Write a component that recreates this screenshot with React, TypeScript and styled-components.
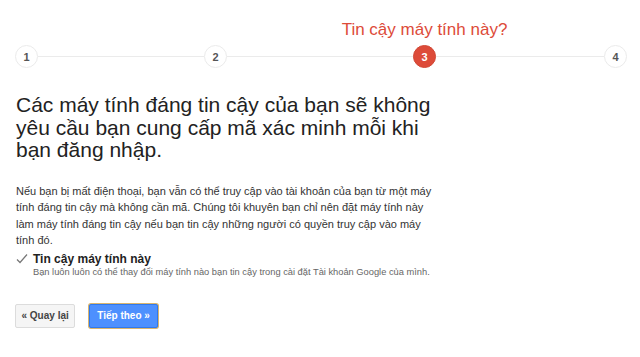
import React from "react";
import styled, { createGlobalStyle } from "styled-components";

const Global = createGlobalStyle`
  html, body { margin: 0; padding: 0; background: #fff; }
  body { font-family: Arial, "Liberation Sans", sans-serif; color: #222; }
`;

const Page = styled.div`
  width: 640px;
  height: 357px;
  box-sizing: border-box;
  padding: 45px 14px 0 15px;
  overflow: hidden;
`;

const Stepper = styled.div`
  display: flex;
  align-items: center;
  height: 23px;
`;

const Step = styled.div<{ $active?: boolean }>`
  position: relative;
  width: 23px;
  height: 23px;
  box-sizing: border-box;
  border-radius: 50%;
  border: 1px solid ${(p) => (p.$active ? "#d14836" : "#ebebeb")};
  background: ${(p) => (p.$active ? "#dd4b39" : "#fff")};
  color: ${(p) => (p.$active ? "#fff" : "#555")};
  font-size: 11px;
  font-weight: bold;
  display: flex;
  align-items: center;
  justify-content: center;
  flex: none;
`;

const StepLabel = styled.div`
  position: absolute;
  bottom: 27px;
  left: 50%;
  transform: translateX(-50%);
  white-space: nowrap;
  color: #dd4b39;
  font-size: 17px;
  font-weight: normal;
`;

const Line = styled.div<{ $w: number }>`
  width: ${(p) => p.$w}px;
  height: 1px;
  background: #ebebeb;
  flex: none;
`;

const Heading = styled.h1`
  margin: 26px 0 0 1px;
  font-size: 21px;
  font-weight: normal;
  line-height: 22.5px;
  color: #222;
  white-space: nowrap;
`;

const Para = styled.p`
  margin: 21px 0 0 1px;
  font-size: 11px;
  line-height: 16.6px;
  color: #333;
  white-space: nowrap;
`;

const CheckRow = styled.div`
  display: flex;
  align-items: flex-start;
  gap: 5px;
  margin: 3px 0 0 1px;
`;

const CheckMark = styled.span`
  width: 12px;
  height: 12px;
  margin-top: 1px;
  flex: none;
  display: flex;
`;

const CheckText = styled.div`
  display: flex;
  flex-direction: column;
`;

const CheckLabel = styled.span`
  font-size: 12px;
  font-weight: bold;
  color: #222;
  line-height: 14px;
`;

const CheckHint = styled.span`
  font-size: 9.3px;
  color: #666;
  line-height: 12px;
`;

const Buttons = styled.div`
  display: flex;
  gap: 14px;
  margin-top: 26px;
`;

const Btn = styled.button<{ $primary?: boolean }>`
  height: 24px;
  box-sizing: border-box;
  padding: 0 ${(p) => (p.$primary ? "7px" : "5.5px")};
  font-family: Arial, "Liberation Sans", sans-serif;
  font-size: 10px;
  font-weight: bold;
  border-radius: 2px;
  cursor: pointer;
  color: ${(p) => (p.$primary ? "#fff" : "#444")};
  background: ${(p) => (p.$primary ? "#4d90fe" : "#f5f5f5")};
  border: 1px solid ${(p) => (p.$primary ? "#3079ed" : "#dcdcdc")};
  box-shadow: ${(p) => (p.$primary ? "0 0 0 1px #d8b46e" : "none")};
`;

export default function App() {
  return (
    <>
      <Global />
      <Page>
        <Stepper>
          <Step>1</Step>
          <Line $w={166} />
          <Step>2</Step>
          <Line $w={186} />
          <Step $active>
            3
            <StepLabel>Tin cậy máy tính này?</StepLabel>
          </Step>
          <Line $w={168} />
          <Step>4</Step>
        </Stepper>
        <Heading>
          Các máy tính đáng tin cậy của bạn sẽ không
          <br />
          yêu cầu bạn cung cấp mã xác minh mỗi khi
          <br />
          bạn đăng nhập.
        </Heading>
        <Para>
          Nếu bạn bị mất điện thoại, bạn vẫn có thể truy cập vào tài khoản của bạn từ một máy
          <br />
          tính đáng tin cậy mà không cần mã. Chúng tôi khuyên bạn chỉ nên đặt máy tính này
          <br />
          làm máy tính đáng tin cậy nếu bạn tin cậy những người có quyền truy cập vào máy
          <br />
          tính đó.
        </Para>
        <CheckRow>
          <CheckMark>
            <svg width="12" height="12" viewBox="0 0 12 12">
              <path d="M1 6.5 L4 9.5 L11 1.5" fill="none" stroke="#777" strokeWidth="1.2" />
            </svg>
          </CheckMark>
          <CheckText>
            <CheckLabel>Tin cậy máy tính này</CheckLabel>
            <CheckHint>
              Bạn luôn luôn có thể thay đổi máy tính nào bạn tin cậy trong cài đặt Tài khoản Google của mình.
            </CheckHint>
          </CheckText>
        </CheckRow>
        <Buttons>
          <Btn>« Quay lại</Btn>
          <Btn $primary>Tiếp theo »</Btn>
        </Buttons>
      </Page>
    </>
  );
}
